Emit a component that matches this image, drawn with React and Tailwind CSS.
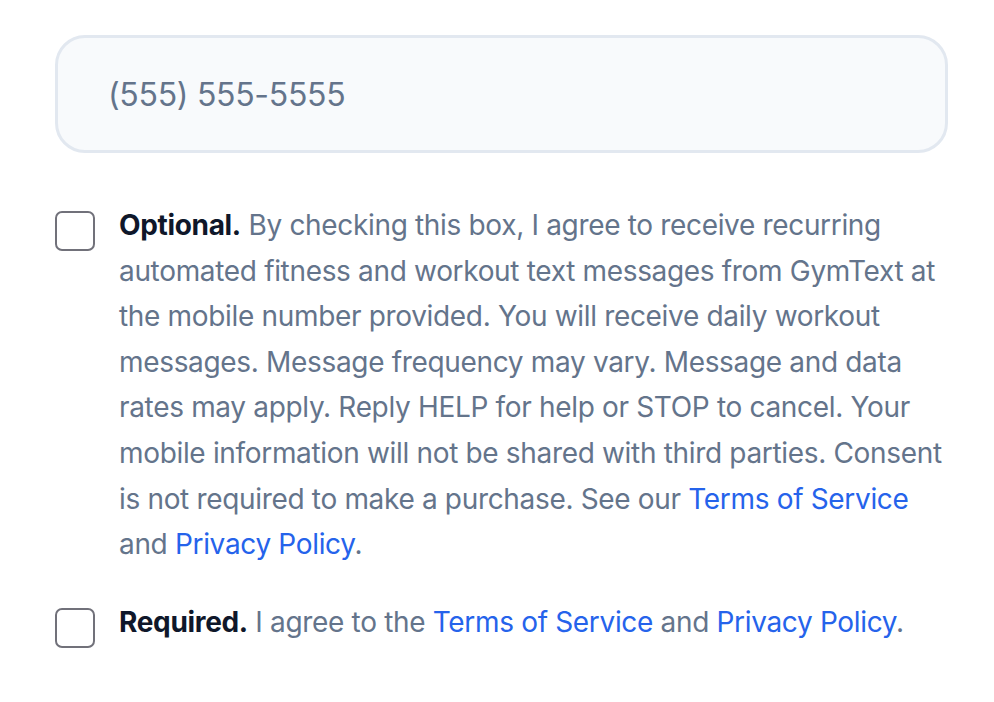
export default function App() {
  return (
    <div className="min-h-screen bg-white" style={{ fontFamily: 'Inter, "Noto Sans", sans-serif' }}>
      <div className="ml-[55px] w-[893px] pt-[35px]">
        <div className="rounded-[30px] border-[3px] border-[#e2e8f0] bg-[#f8fafc] px-[50px] pt-[33px] pb-[31px] text-[32px] leading-[48px] tracking-[-0.3px] text-[#64748b]">
          (555) 555-5555
        </div>
        <div className="mt-[50px] flex flex-col gap-[32px]">
          <label className="flex gap-[24px]">
            <span className="mt-[8px] h-[40px] w-[40px] shrink-0 rounded-[7px] border-2 border-[#71717a] bg-white" />
            <span className="text-[28px] leading-[45.6px] tracking-[-0.33px] text-[#64748b]">
              <span className="font-bold text-[#0f172a]">Optional.</span> By checking this box, I agree to receive recurring automated fitness and workout text messages from GymText at the mobile number provided. You will receive daily workout messages. Message frequency may vary. Message and data rates may apply. Reply HELP for help or STOP to cancel. Your mobile information will not be shared with third parties. Consent is not required to make a purchase. See our{' '}
              <span className="text-[#2563eb]">Terms of Service</span> and{' '}
              <span className="text-[#2563eb]">Privacy Policy</span>.
            </span>
          </label>
          <label className="flex gap-[24px]">
            <span className="mt-[8px] h-[40px] w-[40px] shrink-0 rounded-[7px] border-2 border-[#71717a] bg-white" />
            <span className="text-[28px] leading-[45.6px] tracking-[-0.33px] text-[#64748b]">
              <span className="font-bold text-[#0f172a]">Required.</span> I agree to the{' '}
              <span className="text-[#2563eb]">Terms of Service</span> and{' '}
              <span className="text-[#2563eb]">Privacy Policy</span>.
            </span>
          </label>
        </div>
      </div>
    </div>
  );
}
